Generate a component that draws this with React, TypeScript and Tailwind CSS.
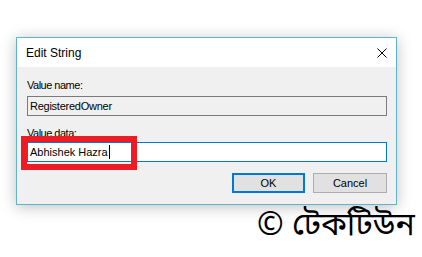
import React from "react";

export default function App() {
  const font = { fontFamily: '"Liberation Sans", Arial, sans-serif' };
  return (
    <div className="relative w-[422px] h-[257px] bg-white overflow-hidden" style={font}>
      <div className="ml-[16px] pt-[37px]">
        <div className="relative w-[381px] h-[168px] border border-[#5fb4c9] bg-[#f0f0f0] shadow-[0_2px_14px_rgba(0,0,0,0.25)] flex flex-col">
          <div className="h-[29px] bg-white flex items-center justify-between pl-[9px] pr-[9px]">
            <span className="text-[12px] text-black leading-none">Edit String</span>
            <svg width="10" height="10" viewBox="0 0 10 10" className="block">
              <path d="M0.5 0.5 L9.5 9.5 M9.5 0.5 L0.5 9.5" stroke="#000" strokeWidth="1" fill="none" />
            </svg>
          </div>
          <div className="flex flex-col pl-[10px] pr-[8px] pt-[10px]">
            <div className="h-[16px] leading-[16px] text-[11px] tracking-[-0.5px] text-black">Value name:</div>
            <div className="mt-[3px] h-[20px] w-[360px] border border-[#7a7a7a] bg-[#f0f0f0] flex items-center px-[2px] text-[11px] tracking-[-0.25px] text-black">
              RegisteredOwner
            </div>
            <div className="mt-[9px] h-[16px] leading-[16px] text-[11px] tracking-[-0.5px] text-black">Value data:</div>
            <div className="mt-[1px] h-[20px] w-[360px] border border-[#0078d7] bg-white flex items-center px-[2px] text-[11px] text-black">
              <span>Abhishek Hazra</span>
              <span className="inline-block w-[1px] h-[14px] bg-black ml-[1px]" />
            </div>
            <div className="mt-[11px] flex justify-end gap-[8px] w-[360px]">
              <div className="w-[73px] h-[20px] border-2 border-[#0078d7] bg-[#e1e1e1] flex items-center justify-center text-[11px] text-black">
                OK
              </div>
              <div className="w-[74px] h-[20px] border border-[#adadad] bg-[#e1e1e1] flex items-center justify-center text-[11px] text-black">
                Cancel
              </div>
            </div>
          </div>
          <div className="absolute left-[4px] top-[98px] w-[116px] h-[34px] border-[6px] border-[#ed1c24]" />
        </div>
      </div>
      <div
        className="absolute left-[257px] top-[204px] text-[32px] leading-[46px] text-black whitespace-nowrap"
        style={{ fontFamily: '"Noto Sans Bengali", "Noto Sans", sans-serif' }}
      >
        © টেকটিউন
      </div>
    </div>
  );
}
